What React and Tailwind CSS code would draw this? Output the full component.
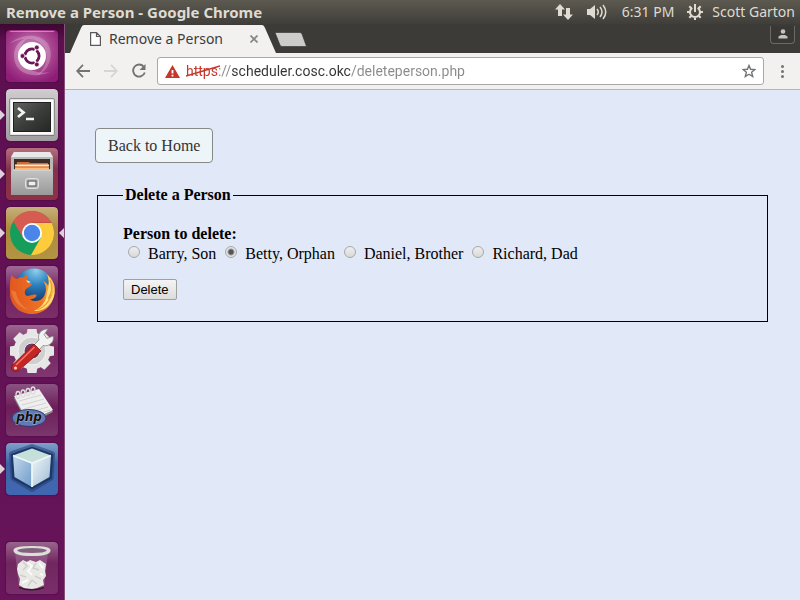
import React from "react";

function DashIcon() {
  return (
    <svg viewBox="0 0 52 52" className="size-full">
      <defs>
        <radialGradient id="dash" cx="50%" cy="40%" r="65%">
          <stop offset="0" stopColor="#d49ac8" />
          <stop offset="0.6" stopColor="#a8448f" />
          <stop offset="1" stopColor="#8f1d78" />
        </radialGradient>
      </defs>
      <rect width="52" height="52" rx="4" fill="url(#dash)" />
      <path d="M3 14C14 4 34 2 42 14C49 26 42 42 30 46C44 36 44 18 32 11C22 6 10 10 3 14Z" fill="#fff" opacity=".22" />
      <path d="M8 26C8 42 24 50 44 42C34 44 18 42 14 26C12 20 16 12 22 8C12 10 8 18 8 26Z" fill="#fff" opacity=".25" />
      <circle cx="26" cy="26" r="14" fill="#fff" />
      <circle cx="26" cy="26" r="7" fill="none" stroke="#6b1556" strokeWidth="3" />
      <g stroke="#fff" strokeWidth="1.5">
        <path d="M26 26H15M26 26L31.500 16.500M26 26L31.500 35.500" />
      </g>
      <circle cx="26" cy="26" r="5.500" fill="#fff" />
      <circle cx="16.500" cy="26" r="2.400" fill="#6b1556" stroke="#fff" strokeWidth=".7" />
      <circle cx="30.800" cy="17.500" r="2.400" fill="#6b1556" stroke="#fff" strokeWidth=".7" />
      <circle cx="30.800" cy="34.500" r="2.400" fill="#6b1556" stroke="#fff" strokeWidth=".7" />
      <path d="M4 1.500H48" stroke="#fff" opacity=".4" />
    </svg>
  );
}

function TerminalIcon() {
  return (
    <svg viewBox="0 0 52 52" className="size-full">
      <defs>
        <linearGradient id="termTile" x2="0" y2="1">
          <stop offset="0" stopColor="#d0cccf" />
          <stop offset="1" stopColor="#a29da1" />
        </linearGradient>
        <linearGradient id="termScreen" x2="1" y2="1">
          <stop offset="0" stopColor="#636561" />
          <stop offset=".5" stopColor="#3c3e3b" />
          <stop offset="1" stopColor="#252724" />
        </linearGradient>
      </defs>
      <rect width="52" height="52" rx="4" fill="url(#termTile)" />
      <rect x="3.500" y="9.500" width="45" height="37" rx="1.500" fill="#e4e4e2" stroke="#8c8c8a" />
      <rect x="5" y="11" width="42" height="34" fill="#fafafa" />
      <rect x="7.500" y="13.500" width="37" height="29" fill="url(#termScreen)" stroke="#1e1e1e" />
      <path d="M4 46.500H48" stroke="#777" />
      <path d="M12 19L17.500 23.500L12 28" fill="none" stroke="#f3f3f3" strokeWidth="2.800" />
      <path d="M20 30H28" stroke="#f3f3f3" strokeWidth="2.400" />
    </svg>
  );
}

function FilesIcon() {
  return (
    <svg viewBox="0 0 52 52" className="size-full">
      <defs>
        <linearGradient id="filesTile" x2="0" y2="1">
          <stop offset="0" stopColor="#b5707f" />
          <stop offset=".4" stopColor="#83324a" />
          <stop offset="1" stopColor="#8d3046" />
        </linearGradient>
        <linearGradient id="filesFront" x2="0" y2="1">
          <stop offset="0" stopColor="#c4c4c4" />
          <stop offset="1" stopColor="#999" />
        </linearGradient>
      </defs>
      <rect width="52" height="52" rx="4" fill="url(#filesTile)" />
      <path d="M8 4H44L47 9V43H5V9Z" fill="#b9b9b9" />
      <path d="M8 4H44L47 9H5Z" fill="#e8e8e8" />
      <rect x="8" y="11" width="36" height="12" fill="#3d2c25" />
      <path d="M11 14H23L24 15H42V22H10Z" fill="#d16b35" />
      <path d="M9 16.500H43V18.500H9Z" fill="#f9e8d2" />
      <path d="M9 18.500H43V23H9Z" fill="#eb8a45" />
      <path d="M9 20.500H43" stroke="#ffbc76" />
      <path d="M7 21.500H45L47 24V47H5V24Z" fill="url(#filesFront)" />
      <path d="M7 22H45" stroke="#ddd" />
      <rect x="19.500" y="30.500" width="13" height="10" rx="2" fill="#bcbcbc" stroke="#dedede" />
      <rect x="22" y="33" width="8" height="5" fill="#eee" stroke="#4a4a4a" />
    </svg>
  );
}

function ChromeIcon() {
  return (
    <svg viewBox="0 0 52 52" className="size-full">
      <defs>
        <linearGradient id="chromeTile" x2="0" y2="1">
          <stop offset="0" stopColor="#c8b07d" />
          <stop offset=".4" stopColor="#ae8b3e" />
          <stop offset="1" stopColor="#b29443" />
        </linearGradient>
      </defs>
      <rect width="52" height="52" rx="4" fill="url(#chromeTile)" />
      <circle cx="26" cy="26" r="22" fill="#149d5b" />
      <path d="M26 16H45.600A22 22 0 0 1 25 48L34.700 31Z" fill="#fdcb3c" />
      <path d="M7.300 14.400A22 22 0 0 1 45.600 16H26L17.300 31Z" fill="#d65b51" />
      <path d="M26 16H45.600L45 15H26Z" fill="#a9412f" opacity=".4" />
      <circle cx="26" cy="26" r="10" fill="#fff" />
      <circle cx="26" cy="26" r="8.200" fill="#4a86ea" />
    </svg>
  );
}

function FirefoxIcon() {
  return (
    <svg viewBox="0 0 52 52" className="size-full">
      <defs>
        <linearGradient id="foxTile" x2="0" y2="1">
          <stop offset="0" stopColor="#a06a98" />
          <stop offset=".45" stopColor="#71225f" />
          <stop offset="1" stopColor="#7b2e69" />
        </linearGradient>
        <radialGradient id="globe" cx="55%" cy="5%" r="85%">
          <stop offset="0" stopColor="#8fd0ee" />
          <stop offset=".45" stopColor="#2b7fbd" />
          <stop offset="1" stopColor="#123466" />
        </radialGradient>
        <linearGradient id="fox" x1="0" x2="1" y1=".2" y2=".1">
          <stop offset="0" stopColor="#e2571f" />
          <stop offset=".65" stopColor="#ee7423" />
          <stop offset="1" stopColor="#ffd75a" />
        </linearGradient>
      </defs>
      <rect width="52" height="52" rx="4" fill="url(#foxTile)" />
      <circle cx="28" cy="22" r="19.500" fill="url(#globe)" />
      <path d="M5.500 9C7 11 9 12.500 11 13C13 11.500 15 11 17 11.500C19 9.500 21 9 22.500 9C20.500 11 20.500 14 22 16C23.500 17 25.500 17 26 18C26 20 22 21 19.500 23.500C18.500 25.500 18.500 28 20 29.500C24 31 26 27.500 30.500 29C31 31 27.500 33 24 33.500C31 37 37 34 39 28C41 23 39.500 18 37 15C40 16 41.500 18 42 20C43.500 16 42.500 11 40.500 8C47 13 50 20 48.500 28C46.500 40 37.500 48 26 48C13 48 4 38.500 4 27C3.500 21 4 14 5.500 9Z" fill="url(#fox)" />
      <path d="M41.500 9C47 16 47.500 25 43.500 32C46.500 30 48 27 48.500 25C48 38 37 46 28 45C36 41 40.500 35 41 27C43 21 44 15 41.500 9Z" fill="#ffe27a" />
      <path d="M44 14C47 21 46 27 42 33M45.500 29C42 38 37 42 31 44" fill="none" stroke="#f29a33" strokeWidth="1.300" />
      <path d="M5 24C7 35 13 42 23 44C16 40 11 34 10 26Z" fill="#f4964d" opacity=".5" />
      <path d="M20 14L25 16L22 17Z" fill="#fbd9b0" />
    </svg>
  );
}

function SettingsIcon() {
  const teeth = [0, 45, 90, 135, 180, 225, 270, 315];
  return (
    <svg viewBox="0 0 52 52" className="size-full">
      <defs>
        <linearGradient id="gearTile" x2="0" y2="1">
          <stop offset="0" stopColor="#9b6791" />
          <stop offset=".45" stopColor="#74265f" />
          <stop offset="1" stopColor="#803771" />
        </linearGradient>
      </defs>
      <rect width="52" height="52" rx="4" fill="url(#gearTile)" />
      <g fill="#e6e6e6">
        {teeth.map((a) => (
          <path key={a} d="M20.500 10L21.500 4H30.500L31.500 10Z" transform={`rotate(${a} 26 26)`} />
        ))}
        <circle cx="26" cy="26" r="18.500" />
      </g>
      <circle cx="26" cy="26" r="14" fill="#cfcfcf" stroke="#f4f4f4" />
      <circle cx="26" cy="26" r="8" fill="#713961" stroke="#ececec" />
      <path d="M28 20L33 15C31 9 35 4 42 4L38 9.500L41 13.500L47 11C49 17 43 22 37 20.500L33 25Z" fill="#f2f2f2" stroke="#888" strokeWidth=".8" />
      <path d="M28 19L35 26L12 46C8 48 3.500 44 6.500 40Z" fill="#c62523" stroke="#801715" strokeWidth=".8" />
      <path d="M28.500 22L10 40" stroke="#ee7a70" strokeWidth="1.500" />
      <circle cx="9.500" cy="43" r="1.500" fill="#f4dcda" />
    </svg>
  );
}

function PhpIcon() {
  return (
    <svg viewBox="0 0 52 52" className="size-full">
      <defs>
        <linearGradient id="phpTile" x2="0" y2="1">
          <stop offset="0" stopColor="#8b5382" />
          <stop offset=".45" stopColor="#6c1e58" />
          <stop offset="1" stopColor="#7b376d" />
        </linearGradient>
      </defs>
      <rect width="52" height="52" rx="4" fill="url(#phpTile)" />
      <path d="M8 14L33 6L47 28L22 41Z" fill="#8b8b8b" />
      <path d="M8 12L33 5L47 26L22 38Z" fill="#eee" />
      <path d="M13 17L35 11M16 21L38 15M18 25L40 19M21 29L42 23M23 33L44 26" stroke="#d2d2d2" />
      <g fill="none" stroke="#ddd" strokeWidth="1.300">
        <ellipse cx="12" cy="11" rx="2" ry="3.500" />
        <ellipse cx="17" cy="9.500" rx="2" ry="3.500" />
        <ellipse cx="22" cy="8" rx="2" ry="3.500" />
        <ellipse cx="27" cy="6.500" rx="2" ry="3.500" />
      </g>
      <ellipse cx="23" cy="34" rx="17" ry="8.500" fill="#6379b4" stroke="#303a70" />
      <text x="23" y="37" textAnchor="middle" className="font-['DejaVu_Sans'] text-[12px] font-bold italic" fill="#111" stroke="#a9b6da" strokeWidth="1" paintOrder="stroke">php</text>
    </svg>
  );
}

function CubeIcon() {
  return (
    <svg viewBox="0 0 52 52" className="size-full">
      <defs>
        <linearGradient id="cubeTile" x2="0" y2="1">
          <stop offset="0" stopColor="#7f9fca" />
          <stop offset=".4" stopColor="#3d65a7" />
          <stop offset="1" stopColor="#4267b2" />
        </linearGradient>
        <linearGradient id="cubeLeft" x2="1" y2="1">
          <stop offset="0" stopColor="#c3d8ea" />
          <stop offset="1" stopColor="#6f9ccb" />
        </linearGradient>
        <linearGradient id="cubeRight" x2="1" y2="1">
          <stop offset="0" stopColor="#f0f7f8" />
          <stop offset="1" stopColor="#9dbbd6" />
        </linearGradient>
      </defs>
      <rect width="52" height="52" rx="4" fill="url(#cubeTile)" />
      <path d="M26 4L46 11L44.500 35L26 46L7.500 35L6 11Z" fill="#1f3a6c" stroke="#1f3a6c" strokeWidth="6" strokeLinejoin="round" opacity=".5" />
      <path d="M26 5L46 12L44.500 35L26 45L7.500 35L6 12Z" fill="#1c3768" stroke="#1c3768" strokeWidth="2.500" strokeLinejoin="round" />
      <path d="M7 12.500L26 20V44L8.500 34Z" fill="url(#cubeLeft)" />
      <path d="M26 20L45 12.500L43.500 34L26 44Z" fill="url(#cubeRight)" />
      <path d="M26 5.500L45 12.500L26 20L7 12.500Z" fill="#c5dfd9" />
      <path d="M7 12.500L26 20L45 12.500M26 20V44" fill="none" stroke="#edf6f8" strokeWidth="1.800" />
    </svg>
  );
}

function TrashIcon() {
  return (
    <svg viewBox="0 0 52 52" className="size-full">
      <defs>
        <linearGradient id="trashTile" x2="0" y2="1">
          <stop offset="0" stopColor="#98658e" />
          <stop offset=".4" stopColor="#71265f" />
          <stop offset="1" stopColor="#7b2e6b" />
        </linearGradient>
      </defs>
      <rect width="52" height="52" rx="4" fill="url(#trashTile)" />
      <path d="M9 10L13 45Q26 50 38 45L42 10Z" fill="#a77c9f" opacity=".45" />
      <path d="M13 45.500Q26 50 38 45.500" fill="none" stroke="#35192f" strokeWidth="1.500" />
      <path d="M12 22L17 18L21 20L24 18L30 20L34 18L40 22L39 29L40 34L37 38L38 43L31 46L26 47L18 46L13 43L14 37L12 32L11 27Z" fill="#e8e8e5" />
      <path d="M17 20L21 24L17 28M30 21L27 26L33 28M29 34L35 37M22 44L26 38L31 42M14 33L20 35" fill="none" stroke="#cfcfcb" strokeWidth="1.500" />
      <path d="M21 20L26 24L22 29L26 33M33 21L37 26M16 41L22 38M34 32L37 33" stroke="#fff" strokeWidth="1.500" fill="none" />
      <ellipse cx="26" cy="8.500" rx="17" ry="4" fill="#82637f" />
      <path d="M7.500 8Q8 4 26 4Q44 4 44.500 8Q45 14 26 14Q7 14 7.500 8ZM11 8.500Q13 11 26 11Q39 11 41 8.500Q39 6 26 6Q13 6 11 8.500Z" fill="#deded9" fillRule="evenodd" />
    </svg>
  );
}

const launchers = [
  { name: "Search your computer", Icon: DashIcon },
  { name: "Terminal", Icon: TerminalIcon, running: true },
  { name: "Files", Icon: FilesIcon, running: true },
  { name: "Google Chrome", Icon: ChromeIcon, running: true, focused: true },
  { name: "Firefox", Icon: FirefoxIcon },
  { name: "System Settings", Icon: SettingsIcon },
  { name: "PHP Editor", Icon: PhpIcon },
  { name: "NetBeans", Icon: CubeIcon, running: true },
  { name: "Trash", Icon: TrashIcon, last: true },
];

function Launcher() {
  return (
    <nav aria-label="Launcher" className="flex w-[65px] shrink-0 flex-col gap-[7px] border-r border-[#86527a] bg-linear-to-b from-[#3d0832] via-[#5e0f50] via-3% to-[#67145a] py-1.5">
      {launchers.map(({ name, Icon, running, focused, last }) => (
        <div key={name} className={last ? "mt-auto flex items-center" : "flex items-center"}>
          <span className="flex w-1.5 shrink-0">
            {running && (
              <svg viewBox="0 0 5 10" className="h-2.5 w-[5px]">
                <path d="M0 0L5 5L0 10Z" fill="#ddd2db" />
              </svg>
            )}
          </span>
          <button type="button" aria-label={name} className="size-[52px] shrink-0 overflow-hidden rounded shadow-[0_0_2px_#3a0831]">
            <Icon />
          </button>
          {focused && (
            <svg viewBox="0 0 5 10" className="ml-px h-2.5 w-[5px] shrink-0">
              <path d="M5 0L0 5L5 10Z" fill="#ddd2db" />
            </svg>
          )}
        </div>
      ))}
    </nav>
  );
}

function SystemBar() {
  return (
    <header className="flex h-6 shrink-0 items-center justify-between bg-linear-to-b from-[#5c5a50] to-[#403e39] pr-[5px] pl-1.5 text-[14px] leading-6 text-[#dfdbd2]">
      <h1 className="text-[15px] font-bold">Remove a Person - Google Chrome</h1>
      <div className="flex items-center">
        <svg viewBox="0 0 18 16" className="mr-3.5 h-4 w-[18px]" fill="#dfdbd2">
          <path d="M5 0L10 5.500H7V12H3V5.500H0ZM13 16L8 10.500H11V4H15V10.500H18Z" />
        </svg>
        <svg viewBox="0 0 20 16" className="mr-[15px] h-4 w-5">
          <path d="M0 5H3L8 1V15L3 11H0Z" fill="#dfdbd2" />
          <path d="M10 5Q12.500 8 10 11M13 3Q17 8 13 13M16 1Q21.500 8 16 15" fill="none" stroke="#dfdbd2" strokeWidth="1.500" />
        </svg>
        <span className="mr-3">6:31 PM</span>
        <svg viewBox="0 0 18 18" className="mr-2 size-[18px]" fill="none" stroke="#dfdbd2" strokeWidth="2">
          <path d="M6.300 4.800A5 5 0 1 0 11.700 4.800M9 1V9M1 9H4M14 9H17M9 14V17M3.300 3.300L5.300 5.300M12.700 5.300L14.700 3.300M3.300 14.700L5.300 12.700M12.700 12.700L14.700 14.700" />
        </svg>
        <span>Scott Garton</span>
      </div>
    </header>
  );
}

function TabStrip() {
  return (
    <div className="flex h-[29px] items-end bg-[#3c3b37]">
      <div className="flex h-7 items-stretch pl-[5px]">
        <svg viewBox="0 0 14 28" className="h-7 w-3.5">
          <path d="M0 28L11 3Q12 0 14 0V28Z" fill="#f2f1f0" />
        </svg>
        <div className="flex w-[178px] items-center bg-[#f2f1f0] pl-1.5 text-[#3c3c3c]">
          <svg viewBox="0 0 11 14" className="h-3.5 w-[11px]" fill="#fff" stroke="#5a5a5a" strokeWidth="1.200">
            <path d="M.600 .600H6.500L10.400 4.500V13.400H.600ZM6.500 .600V4.500H10.400" />
          </svg>
          <span className="ml-2 flex-1 pb-0.5 text-[14px] whitespace-nowrap">Remove a Person</span>
          <button type="button" aria-label="Close tab" className="mr-1">
            <svg viewBox="0 0 8 8" className="size-2" stroke="#858585" strokeWidth="1.700">
              <path d="M.500 .500L7.500 7.500M7.500 .500L.500 7.500" />
            </svg>
          </button>
        </div>
        <svg viewBox="0 0 14 28" className="h-7 w-3.5">
          <path d="M0 0Q2 0 3 3L14 28H0Z" fill="#f2f1f0" />
        </svg>
      </div>
      <button type="button" aria-label="New tab" className="mb-1.5 -ml-0.5">
        <svg viewBox="0 0 33 15" className="h-[15px] w-[33px]">
          <path d="M1 .500H26Q27.500 .500 28 2L32.500 14.500H8Q6.500 14.500 6 13Z" fill="#cecccb" stroke="#302f2c" strokeWidth=".6" />
        </svg>
      </button>
      <button type="button" aria-label="Profile" className="mr-[5px] mb-[9px] ml-auto flex h-[18px] w-[25px] items-center justify-center rounded-b border border-t-0 border-[#6b6a66] bg-[#393834] pb-0.5">
        <svg viewBox="0 0 10 10" className="size-2.5" fill="#c4c3c1">
          <circle cx="5" cy="2.500" r="2.300" />
          <path d="M.500 9.500V7.500L3 6H7L9.500 7.500V9.500Z" />
        </svg>
      </button>
    </div>
  );
}

function Toolbar() {
  return (
    <div className="flex h-[37px] items-center border-b border-[#b5b4b9] bg-[#f2f1f0]">
      <button type="button" aria-label="Back" className="ml-[11px]">
        <svg viewBox="0 0 14 14" className="size-3.5" fill="none" stroke="#737373" strokeWidth="1.800">
          <path d="M14 7H1.500M7 .800L1.200 7L7 13.200" />
        </svg>
      </button>
      <button type="button" aria-label="Forward" className="ml-3.5">
        <svg viewBox="0 0 14 14" className="size-3.5" fill="none" stroke="#d6d5d4" strokeWidth="1.800">
          <path d="M0 7H12.500M7 .800L12.800 7L7 13.200" />
        </svg>
      </button>
      <button type="button" aria-label="Reload" className="ml-[13px]">
        <svg viewBox="0 0 16 16" className="size-4" fill="none" stroke="#737373" strokeWidth="1.900">
          <path d="M12.700 3.700A6 6 0 1 0 13.800 9.500" />
          <path d="M14.500 1V7H8.500Z" fill="#737373" stroke="none" />
        </svg>
      </button>
      <div className="ml-2.5 flex h-7 flex-1 items-center rounded-[3px] border border-[#a9a8a7] bg-white">
        <svg viewBox="0 0 15 13" className="ml-[7px] h-[13px] w-[15px] shrink-0">
          <path d="M7.500 0L15 13H0Z" fill="#c5372b" />
          <path d="M6.600 5H8.400V8.500H6.600ZM6.600 9.700H8.400V11.400H6.600Z" fill="#fff" />
        </svg>
        <div className="relative ml-1.5 flex flex-1">
          <input
            aria-label="Address"
            defaultValue="https://scheduler.cosc.okc/deleteperson.php"
            className="w-full bg-[linear-gradient(90deg,#c5372b_32px,#8a8a8a_32px,#8a8a8a_46px,#333_46px,#333_165px,#8a8a8a_165px)] bg-clip-text font-[Roboto] text-[14px] leading-6 text-transparent outline-none"
          />
          <svg viewBox="0 0 34 12" className="pointer-events-none absolute top-1.5 left-0 h-3 w-[34px]">
            <path d="M0 11L34 1" stroke="#c5372b" strokeWidth="1.600" />
          </svg>
        </div>
        <button type="button" aria-label="Bookmark this page" className="mr-[7px]">
          <svg viewBox="0 0 14 14" className="size-3.5" fill="none" stroke="#737373" strokeWidth="1.400">
            <path d="M7 1.500L8.600 5.300L12.900 5.600L9.600 8.300L10.700 12.500L7 10.200L3.300 12.500L4.400 8.300L1.100 5.600L5.400 5.300Z" />
          </svg>
        </button>
      </div>
      <button type="button" aria-label="Menu" className="mr-4 ml-[17px]">
        <svg viewBox="0 0 3 13" className="h-[13px] w-[3px]" fill="#737373">
          <circle cx="1.500" cy="1.500" r="1.500" />
          <circle cx="1.500" cy="6.500" r="1.500" />
          <circle cx="1.500" cy="11.500" r="1.500" />
        </svg>
      </button>
    </div>
  );
}

const people = ["Barry, Son", "Betty, Orphan", "Daniel, Brother", "Richard, Dad"];

function DeletePage() {
  return (
    <main className="flex-1 bg-[#e1e8f7] pt-[38px] pr-8 pl-[30px] font-['Liberation_Serif',serif] text-[16px] text-black">
      <a href="#home" className="inline-block rounded border border-[#888] bg-[#edf5f8] px-3 py-1.5 leading-[21px] text-[#333]">
        Back to Home
      </a>
      <form onSubmit={(e) => e.preventDefault()} className="mt-[23px] ml-0.5">
        <fieldset className="border border-black px-[25px] pt-5 pb-[21px]">
          <legend className="px-0.5 leading-[18px] font-bold">Delete a Person</legend>
          <div role="radiogroup" aria-labelledby="person-label">
            <p id="person-label" className="leading-5 font-bold">Person to delete:</p>
            <div className="flex flex-wrap gap-x-[9px] pl-[5px]">
              {people.map((person) => (
                <label key={person} className="flex items-center gap-2 leading-5">
                  <input
                    type="radio"
                    name="person"
                    defaultChecked={person === "Betty, Orphan"}
                    className="mb-1 size-3 appearance-none rounded-full border border-[#a9a9a9] bg-linear-to-b from-[#eee] to-[#d9d9d9] checked:bg-[radial-gradient(circle,#555_2px,#e4e4e4_4px)]"
                  />
                  {person}
                </label>
              ))}
            </div>
          </div>
          <button type="submit" className="mt-[15px] block rounded-[2px] border border-[#a0a0a0] bg-linear-to-b from-[#f4f4f4] to-[#dcdcdc] px-[7px] font-['Liberation_Sans',sans-serif] text-[13px] leading-[19px]">
            Delete
          </button>
        </fieldset>
      </form>
    </main>
  );
}

export default function App() {
  return (
    <div className="flex min-h-screen flex-col font-['Noto_Sans',sans-serif]">
      <SystemBar />
      <div className="flex flex-1">
        <Launcher />
        <div className="flex min-w-0 flex-1 flex-col">
          <TabStrip />
          <Toolbar />
          <DeletePage />
        </div>
      </div>
    </div>
  );
}
